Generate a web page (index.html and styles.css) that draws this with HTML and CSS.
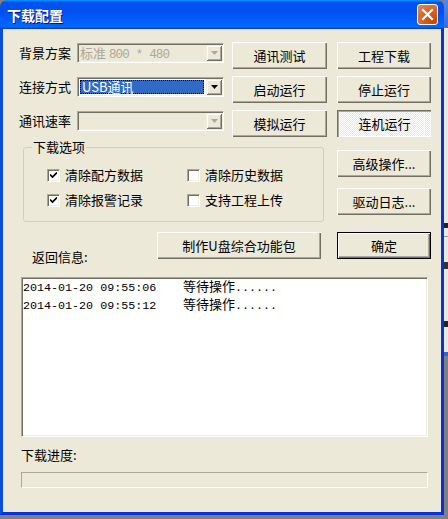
FILE: index.html
```html
<!DOCTYPE html>
<html lang="zh-CN">
<head>
<meta charset="utf-8">
<title>下载配置</title>
<link rel="stylesheet" href="styles.css">
</head>
<body>
<div class="screen">
  <div class="window">
    <div class="titlebar">
      <span class="title">下载配置</span>
      <button class="close" aria-label="关闭">
        <svg width="21" height="21" viewBox="0 0 21 21"><path d="M6 6 L15 15 M15 6 L6 15" stroke="#fff" stroke-width="2.2" stroke-linecap="square" fill="none"/></svg>
      </button>
    </div>
    <div class="client">
      <div class="top">
        <div class="fields">
          <span class="lbl">背景方案</span>
          <div class="combo disabled">
            <span class="combo-text">标准 <span class="half">800 * 480</span></span>
            <span class="drop"><svg width="7" height="4" viewBox="0 0 7 4"><polygon points="0,0 7,0 3.5,4" class="arrow"/></svg></span>
          </div>
          <span class="lbl">连接方式</span>
          <div class="combo">
            <span class="combo-sel">USB通讯</span>
            <span class="drop"><svg width="7" height="4" viewBox="0 0 7 4"><polygon points="0,0 7,0 3.5,4" class="arrow"/></svg></span>
          </div>
          <span class="lbl">通讯速率</span>
          <div class="combo disabled">
            <span class="combo-text"></span>
            <span class="drop"><svg width="7" height="4" viewBox="0 0 7 4"><polygon points="0,0 7,0 3.5,4" class="arrow"/></svg></span>
          </div>
        </div>
        <div class="btngrid">
          <button class="btn">通讯测试</button>
          <button class="btn">工程下载</button>
          <button class="btn">启动运行</button>
          <button class="btn">停止运行</button>
          <button class="btn">模拟运行</button>
          <button class="btn pressed">连机运行</button>
        </div>
      </div>

      <div class="mid">
        <fieldset class="group">
          <legend>下载选项</legend>
          <div class="checks">
            <label class="check"><span class="box on"><svg width="7" height="7" viewBox="0 0 7 7"><path d="M0 2.5 L2.5 5 L7 0.5" stroke="#000" stroke-width="1.7" fill="none"/></svg></span>清除配方数据</label>
            <label class="check"><span class="box"></span>清除历史数据</label>
            <label class="check"><span class="box on"><svg width="7" height="7" viewBox="0 0 7 7"><path d="M0 2.5 L2.5 5 L7 0.5" stroke="#000" stroke-width="1.7" fill="none"/></svg></span>清除报警记录</label>
            <label class="check"><span class="box"></span>支持工程上传</label>
          </div>
        </fieldset>
        <div class="side">
          <button class="btn">高级操作...</button>
          <button class="btn">驱动日志...</button>
        </div>
      </div>

      <div class="actions">
        <span class="ret-lbl">返回信息:</span>
        <button class="btn wide">制作U盘综合功能包</button>
        <button class="btn default">确定</button>
      </div>

      <div class="list">
        <div class="line"><span class="ts">2014-01-20 09:55:06</span><span class="msg">等待操作</span><span>......</span></div>
        <div class="line"><span class="ts">2014-01-20 09:55:12</span><span class="msg">等待操作</span><span>......</span></div>
      </div>

      <div class="prog-lbl">下载进度:</div>
      <div class="progress"></div>
    </div>
  </div>
  <div class="behind"></div>
</div>
</body>
</html>
```

FILE: styles.css
```css
* { box-sizing: border-box; }
html, body { margin: 0; padding: 0; }
body {
  width: 448px;
  height: 519px;
  overflow: hidden;
  background: #808080;
  font: 13px/14px "Noto Sans CJK SC", "Noto Sans", sans-serif;
  color: #000;
}
.screen { display: flex; align-items: flex-start; height: 519px; }
.window { width: 444px; height: 515px; display: flex; flex-direction: column; }
.behind {
  width: 4px;
  height: 519px;
  background: linear-gradient(to bottom, #5a86e0 0, #3b6bd6 28px, #ECE9D8 28px, #ECE9D8 223px, #222 223px, #222 228px, #ECE9D8 228px, #ECE9D8 236px, #9a9a90 236px, #9a9a90 237px, #ECE9D8 237px, #ECE9D8 262px, #333 262px, #333 269px, #ECE9D8 269px, #ECE9D8 321px, #222 321px, #222 327px, #ECE9D8 327px, #ECE9D8 352px, #3f5fcf 352px, #3f5fcf 356px, #808080 356px);
}

/* title bar */
.titlebar {
  height: 29px;
  flex: none;
  border-radius: 7px 7px 0 0;
  background: linear-gradient(to bottom, #0997ff 0%, #0053ee 8%, #0050ee 40%, #0066ff 88%, #0066ff 93%, #005bff 95%, #003dd7 96%, #003dd7 100%);
  display: flex;
  align-items: center;
  justify-content: space-between;
  padding: 0 6px 0 7px;
}
.title {
  color: #fff;
  font-weight: bold;
  font-size: 14px;
  line-height: 16px;
  text-shadow: 1px 1px #0f1089;
}
.close {
  width: 21px;
  height: 21px;
  padding: 0;
  border: 1px solid #fff;
  border-radius: 3px;
  background: radial-gradient(circle at 80% 85%, #cc4600 0%, #dc6527 55%, #e68b5f 100%);
  display: flex;
  align-items: center;
  justify-content: center;
}
.close svg { display: block; margin: -1px; }

/* client area */
.client {
  flex: 1;
  background: #ECE9D8;
  border: 3px solid #0831d9;
  border-top: none;
  border-left-color: #0b4ddc;
  display: flex;
  flex-direction: column;
}

.top { display: flex; margin-top: 13px; padding-left: 16px; }
.fields {
  display: grid;
  grid-template-columns: 58px 147px;
  grid-auto-rows: 27px;
  row-gap: 7px;
  align-items: start;
}
.lbl { margin-top: 1px; line-height: 20px; }
.combo {
  margin-top: 1px;
  height: 20px;
  display: flex;
  border: 1px solid;
  border-color: #ACA899 #fff #fff #ACA899;
  box-shadow: inset 1px 1px #716F64, inset -1px -1px #F1EFE2;
  background: #fff;
  padding: 1px;
}
.combo.disabled { background: #ECE9D8; }
.combo-text {
  flex: 1;
  padding-left: 1px;
  line-height: 16px;
  color: #ACA899;
  white-space: pre;
}
.half { font-family: "Liberation Mono", monospace; font-size: 12.5px; letter-spacing: -0.8px; }
.combo-sel {
  flex: 1;
  margin: 1px 2px 1px 1px;
  background: #316AC5;
  color: #fff;
  border: 1px dotted #000;
  line-height: 12px;
  padding-left: 1px;
}
.drop {
  width: 16px;
  flex: none;
  background: #ECE9D8;
  box-shadow: inset 1px 1px #F1EFE2, inset -1px -1px #716F64, inset 2px 2px #fff, inset -2px -2px #ACA899;
  display: flex;
  align-items: center;
  justify-content: center;
}
.drop svg { display: block; }
.arrow { fill: #000; }
.disabled .arrow { fill: #ACA899; }

.btngrid {
  margin-left: 8px;
  display: grid;
  grid-template-columns: 95px 94px;
  grid-auto-rows: 27px;
  column-gap: 10px;
  row-gap: 7px;
}
.btn {
  font: inherit;
  color: #000;
  background: #ECE9D8;
  border: none;
  padding: 0;
  height: 27px;
  box-shadow: inset 1px 1px #fff, inset -1px -1px #716F64, inset -2px -2px #ACA899;
}
.btn.pressed {
  background: repeating-conic-gradient(#fff 0 25%, #ECE9D8 0 50%) 0 0 / 2px 2px;
  box-shadow: inset 1px 1px #716F64, inset 2px 2px #ACA899, inset -1px -1px #fff;
  padding: 1px 0 0 1px;
}

.mid { display: flex; margin-top: 3px; padding-left: 20px; }
.group {
  width: 301px;
  height: 82px;
  margin: 0;
  padding: 13px 0 0 23px;
  border: 1px solid #D0D0BF;
  border-radius: 3px;
}
.group legend {
  margin-left: -15px;
  padding: 0 1px;
  line-height: 14px;
}
.checks {
  display: grid;
  grid-template-columns: 140px auto;
  grid-auto-rows: 16px;
  row-gap: 9px;
}
.check { display: flex; align-items: center; gap: 5px; }
.box {
  width: 13px;
  height: 13px;
  flex: none;
  background: #fff;
  border: 1px solid;
  border-color: #ACA899 #fff #fff #ACA899;
  box-shadow: inset 1px 1px #716F64, inset -1px -1px #F1EFE2;
  display: flex;
  align-items: center;
  justify-content: center;
}
.box svg { display: block; }
.side {
  margin-left: 13px;
  margin-top: 10px;
  display: flex;
  flex-direction: column;
  gap: 11px;
}
.side .btn { width: 94px; }

.actions { display: flex; align-items: flex-start; margin-top: 10px; padding-left: 29px; }
.ret-lbl { width: 125px; margin-top: 18px; line-height: 14px; }
.btn.wide { width: 164px; }
.btn.default {
  width: 94px;
  margin-left: 16px;
  border: 1px solid #000;
  box-shadow: inset 1px 1px #fff, inset -1px -1px #716F64, inset -2px -2px #ACA899;
}

.list {
  margin: 13px 0 0 18px;
  width: 407px;
  height: 160px;
  background: #fff;
  border: 1px solid;
  border-color: #ACA899 #fff #fff #ACA899;
  box-shadow: inset 1px 1px #716F64, inset -1px -1px #F1EFE2;
  padding: 0 0 0 1px;
}
.line {
  display: flex;
  align-items: baseline;
  line-height: 15px;
  font-family: "Liberation Mono", "Noto Sans CJK SC", monospace;
  font-size: 11.7px;
}
.ts { width: 160px; flex: none; }
.msg { font-family: "Noto Sans CJK SC", sans-serif; font-size: 13px; }

.prog-lbl { margin: 11px 0 0 18px; line-height: 14px; }
.progress {
  margin: 10px 0 0 18px;
  width: 407px;
  height: 16px;
  border: 1px solid;
  border-color: #ACA899 #fff #fff #ACA899;
  background: #ECE9D8;
}
```
